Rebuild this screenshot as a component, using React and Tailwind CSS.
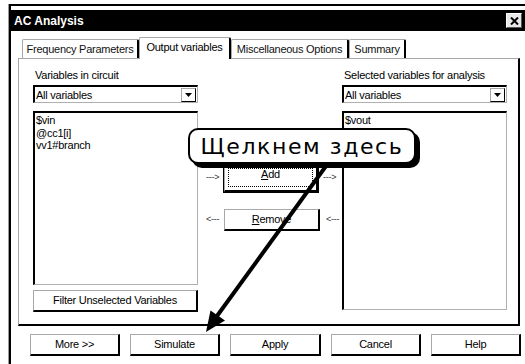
import React from 'react';

const sunken = 'border-t-2 border-l-2 border-t-black border-l-black border-b border-r border-b-[#b0b0b0] border-r-[#b0b0b0] bg-white';
const raised = 'border-t border-l border-t-[#a8a8a8] border-l-[#a8a8a8] border-b-2 border-r-2 border-b-black border-r-black bg-white';

function Dropdown({ value }) {
  return (
    <div className={`h-[18px] flex items-center ${sunken}`}>
      <span className="flex-1 pl-[1px] leading-[14px]">{value}</span>
      <div className="w-[15px] h-[14px] mr-[1px] border border-[#a8a8a8] border-r-black border-b-black flex items-center justify-center">
        <svg width="7" height="4" viewBox="0 0 7 4"><polygon points="0,0 7,0 3.5,4" fill="#000" /></svg>
      </div>
    </div>
  );
}

function Tab({ label, active, width }) {
  return active ? (
    <div className={`relative z-10 h-[22px] -mb-px pt-[2px] text-center bg-white border-t border-l border-[#a8a8a8] border-r-2 border-r-black rounded-t-[2px] leading-[14px] ${width}`}>
      {label}
    </div>
  ) : (
    <div className={`h-[19px] pt-[2px] text-center border-t border-l border-[#a8a8a8] border-r-2 border-r-black rounded-t-[2px] leading-[14px] text-[#111] ${width}`}>
      {label}
    </div>
  );
}

function Button({ children, className = '' }) {
  return (
    <div className={`h-[22px] flex items-center justify-center ${raised} ${className}`}>{children}</div>
  );
}

export default function App() {
  return (
    <div className="relative w-[525px] h-[364px] bg-white overflow-hidden text-[11px] tracking-[-0.25px] text-black font-['Liberation_Sans',Arial,sans-serif]">
      <div className="ml-[8px] mt-[4px] w-[530px] h-[370px] border-l border-[#9a9a9a]">
        <div className="h-full border-l-2 border-t-2 border-black pt-[4px]">
          {/* title bar */}
          <div className="w-[514px] h-[21px] bg-black flex items-center pl-[3px] pr-[3px]">
            <span className="flex-1 text-white font-bold text-[12px] tracking-normal">AC Analysis</span>
            <div className="w-[16px] h-[15px] bg-[#e8e8e8] border border-white border-r-[#555] border-b-[#555] flex items-center justify-center">
              <svg width="9" height="8" viewBox="0 0 9 8"><path d="M1 0.5 L8 7.5 M8 0.5 L1 7.5" stroke="#000" strokeWidth="2" /></svg>
            </div>
          </div>

          {/* tabs */}
          <div className="ml-[7px] mt-[5px] pl-[4px] flex items-end h-[22px]">
            <Tab label="Frequency Parameters" width="w-[117px]" />
            <Tab label="Output variables" width="w-[92px]" active />
            <Tab label="Miscellaneous Options" width="w-[118px]" />
            <Tab label="Summary" width="w-[57px]" />
          </div>

          {/* panel */}
          <div className="ml-[7px] w-[502px] h-[268px] border-t border-l border-[#a8a8a8] border-r-2 border-b-2 border-r-black border-b-black flex pl-[14px] pt-[9px]">
            <div className="w-[165px] flex flex-col">
              <div className="h-[14px] leading-[14px] pl-[2px]">Variables in circuit</div>
              <div className="mt-[3px]"><Dropdown value="All variables" /></div>
              <div className={`mt-[8px] h-[174px] pl-[1px] pt-[1px] leading-[12.5px] ${sunken}`}>
                <div>$vin</div>
                <div>@cc1[i]</div>
                <div>vv1#branch</div>
              </div>
              <Button className="mt-[5px]">Filter Unselected Variables</Button>
            </div>

            <div className="w-[144px] flex flex-col pt-[95px] text-[#333]">
              <div className="flex items-center h-[30px]">
                <span className="w-[25px] pl-[8px] text-[9px]">---&gt;</span>
                <div className="w-[96px] h-[30px] border border-black">
                  <div className={`h-full ${raised} p-[3px]`}>
                    <div className="h-full border border-dotted border-black flex items-center justify-center pb-[6px] text-black">
                      <span><u>A</u>dd</span>
                    </div>
                  </div>
                </div>
                <span className="pl-[4px] text-[9px]">---&gt;</span>
              </div>
              <div className="flex items-center h-[22px] mt-[16px]">
                <span className="w-[26px] pl-[8px] text-[9px]">&lt;---</span>
                <Button className="w-[96px] text-black"><span><u>R</u>emove</span></Button>
                <span className="pl-[6px] text-[9px]">&lt;---</span>
              </div>
            </div>

            <div className="w-[165px] flex flex-col">
              <div className="h-[14px] leading-[14px] pl-[2px]">Selected variables for analysis</div>
              <div className="mt-[3px]"><Dropdown value="All variables" /></div>
              <div className={`mt-[8px] h-[199px] pl-[1px] pt-[1px] leading-[12.5px] ${sunken}`}>
                <div>$vout</div>
              </div>
            </div>
          </div>

          {/* bottom buttons */}
          <div className="flex gap-[10px] ml-[19px] mt-[8px]">
            <Button className="w-[90px]">More &gt;&gt;</Button>
            <Button className="w-[90px]">Simulate</Button>
            <Button className="w-[91px]">Apply</Button>
            <Button className="w-[90px]">Cancel</Button>
            <Button className="w-[90px]">Help</Button>
          </div>
        </div>
      </div>

      {/* callout */}
      <div className="absolute left-[188px] top-[128px] w-[228px] h-[36px] rounded-[10px] border-2 border-black bg-white shadow-[4px_4px_0_#000] flex items-center justify-center text-[22px] font-['DejaVu_Sans',sans-serif] tracking-[1.6px]">
        Щелкнем здесь
      </div>

      {/* arrow */}
      <svg className="absolute left-0 top-0 pointer-events-none" width="525" height="364" viewBox="0 0 525 364">
        <line x1="326" y1="166" x2="217" y2="316" stroke="#000" strokeWidth="4" />
        <polygon points="206,332 210.5,310.5 225,320.5" fill="#000" />
      </svg>
    </div>
  );
}
